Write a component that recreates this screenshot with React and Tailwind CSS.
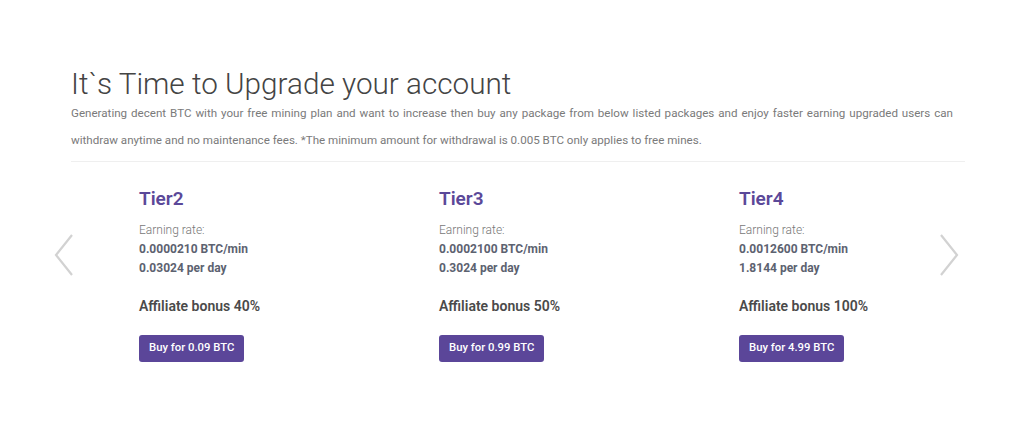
import React from "react";

const tiers = [
  { name: "Tier2", perMin: "0.0000210 BTC/min", perDay: "0.03024 per day", bonus: "40%", price: "0.09" },
  { name: "Tier3", perMin: "0.0002100 BTC/min", perDay: "0.3024 per day", bonus: "50%", price: "0.99" },
  { name: "Tier4", perMin: "0.0012600 BTC/min", perDay: "1.8144 per day", bonus: "100%", price: "4.99" },
];

const Chevron = ({ dir }) => (
  <svg className="mt-[47px] shrink-0" width="20" height="42" viewBox="0 0 20 42" fill="none">
    <path
      d={dir === "left" ? "M18 1 L2 21 L18 41" : "M2 1 L18 21 L2 41"}
      stroke="#d2d2d2"
      strokeWidth="2.2"
    />
  </svg>
);

const TierCard = ({ tier, last }) => (
  <div className={last ? "w-[200px]" : "w-[300px]"}>
    <h3 className="text-[19px] leading-[24px] font-semibold text-[#5b4899]">{tier.name}</h3>
    <div className="mt-[10px] text-[12px] leading-[19px]">
      <p className="font-light text-[#777]">Earning rate:</p>
      <p className="font-bold text-[#5c6270]">{tier.perMin}</p>
      <p className="font-bold text-[#5c6270]">{tier.perDay}</p>
    </div>
    <p className="mt-[18px] text-[14px] leading-[20px] font-semibold text-[#4a4a4a]">
      Affiliate bonus {tier.bonus}
    </p>
    <button className="mt-[19px] h-[27px] px-[10px] rounded-[3px] bg-[#5b4699] text-white text-[11.3px] font-medium">
      Buy for {tier.price} BTC
    </button>
  </div>
);

export default function App() {
  return (
    <div className="w-[1024px] h-[434px] bg-white font-['Roboto',sans-serif] overflow-hidden">
      <div className="pt-[66px] pl-[71px] w-[965px]">
        <h1 className="text-[29.7px] leading-[36px] font-light text-[#444]">It`s Time to Upgrade your account</h1>
        <p className="w-[882px] text-[11.6px] leading-[27px] text-[#7a7a7a] text-justify mt-[-2px]">
          Generating decent BTC with your free mining plan and want to increase then buy any package from below listed packages and enjoy faster earning upgraded users can withdraw anytime and no maintenance fees. *The minimum amount for withdrawal is 0.005 BTC only applies to free mines.
        </p>
        <div className="mt-[7px] border-t border-[#efefef]" />
      </div>
      <div className="flex items-start pl-[54px] mt-[25px]">
        <Chevron dir="left" />
        <div className="flex ml-[65px]">
          {tiers.map((t, i) => (
            <TierCard key={t.name} tier={t} last={i === tiers.length - 1} />
          ))}
        </div>
        <Chevron dir="right" />
      </div>
    </div>
  );
}
